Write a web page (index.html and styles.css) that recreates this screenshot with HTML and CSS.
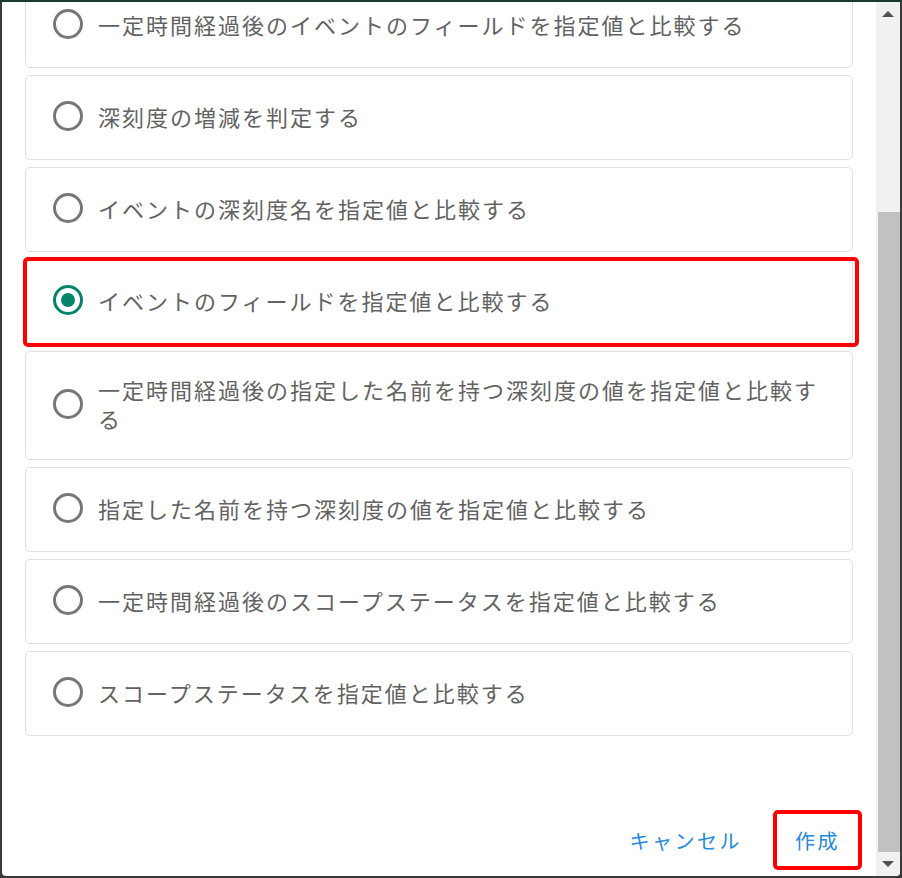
FILE: index.html
```html
<!DOCTYPE html>
<html lang="ja">
<head>
<meta charset="utf-8">
<link rel="stylesheet" href="styles.css">
</head>
<body>
<div class="dialog">
  <div class="content">
    <div class="list">
      <label class="card"><span class="radio"></span><span class="label">一定時間経過後のイベントのフィールドを指定値と比較する</span></label>
      <label class="card"><span class="radio"></span><span class="label">深刻度の増減を判定する</span></label>
      <label class="card"><span class="radio"></span><span class="label">イベントの深刻度名を指定値と比較する</span></label>
      <label class="card selected"><span class="radio checked"></span><span class="label">イベントのフィールドを指定値と比較する</span></label>
      <label class="card"><span class="radio"></span><span class="label">一定時間経過後の指定した名前を持つ深刻度の値を指定値と比較する</span></label>
      <label class="card"><span class="radio"></span><span class="label">指定した名前を持つ深刻度の値を指定値と比較する</span></label>
      <label class="card"><span class="radio"></span><span class="label">一定時間経過後のスコープステータスを指定値と比較する</span></label>
      <label class="card"><span class="radio"></span><span class="label">スコープステータスを指定値と比較する</span></label>
    </div>
    <div class="footer">
      <button class="btn">キャンセル</button>
      <button class="btn marked">作成</button>
    </div>
  </div>
  <div class="scrollbar">
    <div class="sb-btn"><span class="arrow-up"></span></div>
    <div class="sb-track"><div class="sb-thumb"></div></div>
    <div class="sb-btn"><span class="arrow-down"></span></div>
  </div>
</div>
</body>
</html>
```
FILE: styles.css
```css
* { box-sizing: border-box; }
html, body { margin: 0; padding: 0; }
body {
  width: 902px;
  height: 878px;
  overflow: hidden;
  background: linear-gradient(#173a31 0 2px, #3a3a3a 2px);
  font-family: "Noto Sans CJK JP", "Noto Sans", sans-serif;
}
.dialog {
  margin: 2px 2px 0 2px;
  height: 874px;
  background: #fff;
  border-radius: 0 0 4px 4px;
  display: flex;
  overflow: hidden;
}
.content {
  flex: 1;
  display: flex;
  flex-direction: column;
  overflow: hidden;
}
.list {
  margin-top: -19px;
  padding: 0 23px 0 23px;
  display: flex;
  flex-direction: column;
  gap: 7px;
}
.card {
  position: relative;
  min-height: 85px;
  border: 1px solid #e0e0e0;
  border-radius: 5px;
  display: flex;
  align-items: center;
  padding: 23px 22px 26px 27px;
  color: #626262;
  font-size: 22px;
  letter-spacing: 2px;
  line-height: 29px;
}
.card.selected::after {
  content: "";
  position: absolute;
  top: -3px;
  left: -3px;
  right: -7px;
  bottom: -4px;
  border: 4px solid #ff0000;
  border-radius: 5px;
}
.radio {
  flex: none;
  width: 30px;
  height: 30px;
  border: 3px solid #777;
  border-radius: 50%;
  margin-right: 15px;
  display: flex;
  align-items: center;
  justify-content: center;
}
.radio.checked { border-color: #00856d; }
.radio.checked::before {
  content: "";
  width: 14px;
  height: 14px;
  border-radius: 50%;
  background: #00856d;
}
.label { flex: 1; }
.footer {
  margin-top: auto;
  display: flex;
  justify-content: flex-end;
  align-items: center;
  gap: 14px;
  padding: 0 16px 8px 0;
}
.btn {
  position: relative;
  height: 56px;
  padding: 0 20px 0 19px;
  border: 0;
  background: transparent;
  color: #2489e0;
  font-family: "Noto Sans CJK JP", "Noto Sans", sans-serif;
  font-size: 20px;
  letter-spacing: 2.5px;
}
.btn.marked::after {
  content: "";
  position: absolute;
  top: -2px;
  left: -3px;
  right: -2px;
  bottom: -2px;
  border: 4px solid #ff0000;
  border-radius: 5px;
}
.scrollbar {
  flex: none;
  width: 24px;
  background: #f1f1f1;
  display: flex;
  flex-direction: column;
}
.sb-btn {
  height: 24px;
  display: flex;
  align-items: center;
  justify-content: center;
}
.sb-track {
  flex: 1;
  padding-top: 186px;
  display: flex;
}
.sb-thumb {
  flex: 1;
  margin-left: 2px;
  background: #c1c1c1;
}
.arrow-up, .arrow-down {
  width: 0;
  height: 0;
  border-left: 6px solid transparent;
  border-right: 6px solid transparent;
}
.arrow-up { border-bottom: 6px solid #505050; }
.arrow-down { border-top: 6px solid #505050; }
```
